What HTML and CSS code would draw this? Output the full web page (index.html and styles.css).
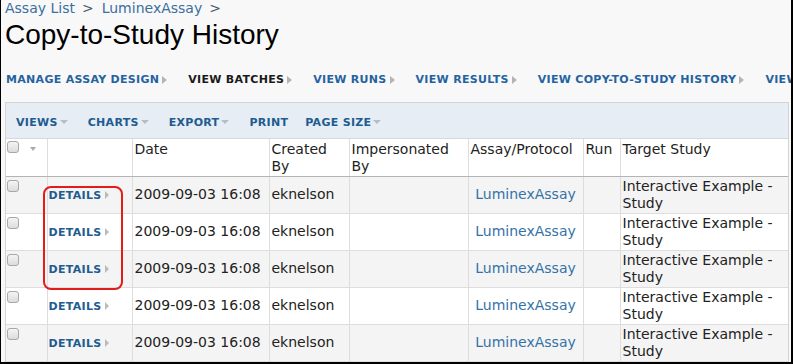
FILE: index.html
```html
<!DOCTYPE html>
<html lang="en">
<head>
    <meta charset="UTF-8">
    <meta name="viewport" content="width=device-width, initial-scale=1.0">
    <title>Copy-to-Study History</title>
    <link rel="stylesheet" href="styles.css">
</head>
<body>
    <div class="frame">
        <div class="crumbs"><a href="#">Assay List</a><span class="sep">&gt;</span><a href="#">LuminexAssay</a><span class="sep">&gt;</span></div>
        <h1 class="title">Copy-to-Study History</h1>
        <div class="assay-nav">
            <a class="nav-link" href="#">Manage Assay Design<span class="arrow"></span></a>
            <a class="nav-link current" href="#">View Batches<span class="arrow"></span></a>
            <a class="nav-link" href="#">View Runs<span class="arrow"></span></a>
            <a class="nav-link" href="#">View Results<span class="arrow"></span></a>
            <a class="nav-link" href="#">View Copy-to-Study History<span class="arrow"></span></a>
            <a class="nav-link" href="#">View<span class="arrow"></span></a>
        </div>
        <div class="grid">
            <div class="toolbar">
                <a class="tool" href="#">Views<span class="drop"></span></a>
                <a class="tool" href="#">Charts<span class="drop"></span></a>
                <a class="tool" href="#">Export<span class="drop"></span></a>
                <a class="tool" href="#">Print</a>
                <a class="tool" href="#">Page Size<span class="drop"></span></a>
            </div>
            <table>
                <colgroup>
                    <col style="width: 41px">
                    <col style="width: 85px">
                    <col style="width: 137px">
                    <col style="width: 80px">
                    <col style="width: 119px">
                    <col style="width: 115px">
                    <col style="width: 37px">
                    <col>
                </colgroup>
                <thead>
                    <tr>
                        <th><input type="checkbox" class="check"><span class="drop head-drop"></span></th>
                        <th></th>
                        <th>Date</th>
                        <th>Created By</th>
                        <th>Impersonated By</th>
                        <th>Assay/Protocol</th>
                        <th>Run</th>
                        <th>Target Study</th>
                    </tr>
                </thead>
                <tbody>
                    <tr class="odd">
                        <td class="sel"><input type="checkbox" class="check"></td>
                        <td><a class="details" href="#">Details<span class="arrow"></span></a></td>
                        <td>2009-09-03 16:08</td>
                        <td>eknelson</td>
                        <td></td>
                        <td class="lookup"><a href="#">LuminexAssay</a></td>
                        <td></td>
                        <td>Interactive Example - Study</td>
                    </tr>
                    <tr>
                        <td class="sel"><input type="checkbox" class="check"></td>
                        <td><a class="details" href="#">Details<span class="arrow"></span></a></td>
                        <td>2009-09-03 16:08</td>
                        <td>eknelson</td>
                        <td></td>
                        <td class="lookup"><a href="#">LuminexAssay</a></td>
                        <td></td>
                        <td>Interactive Example - Study</td>
                    </tr>
                    <tr class="odd">
                        <td class="sel"><input type="checkbox" class="check"></td>
                        <td><a class="details" href="#">Details<span class="arrow"></span></a></td>
                        <td>2009-09-03 16:08</td>
                        <td>eknelson</td>
                        <td></td>
                        <td class="lookup"><a href="#">LuminexAssay</a></td>
                        <td></td>
                        <td>Interactive Example - Study</td>
                    </tr>
                    <tr>
                        <td class="sel"><input type="checkbox" class="check"></td>
                        <td><a class="details" href="#">Details<span class="arrow"></span></a></td>
                        <td>2009-09-03 16:08</td>
                        <td>eknelson</td>
                        <td></td>
                        <td class="lookup"><a href="#">LuminexAssay</a></td>
                        <td></td>
                        <td>Interactive Example - Study</td>
                    </tr>
                    <tr class="odd">
                        <td class="sel"><input type="checkbox" class="check"></td>
                        <td><a class="details" href="#">Details<span class="arrow"></span></a></td>
                        <td>2009-09-03 16:08</td>
                        <td>eknelson</td>
                        <td></td>
                        <td class="lookup"><a href="#">LuminexAssay</a></td>
                        <td></td>
                        <td>Interactive Example - Study</td>
                    </tr>
                </tbody>
            </table>
        </div>
        <div class="callout"></div>
    </div>
</body>
</html>
```

FILE: styles.css
```css
* {
    box-sizing: border-box;
}
html, body {
    margin: 0;
    padding: 0;
}
body {
    font-family: "DejaVu Sans", Verdana, sans-serif;
    color: #222;
}
a {
    text-decoration: none;
}
.frame {
    position: relative;
    width: 793px;
    height: 364px;
    overflow: hidden;
    background-color: #f8f8f8;
    border-left: 1px solid #000;
    border-right: 2px solid #000;
    border-bottom: 2px solid #000;
    padding-left: 4px;
}
.crumbs {
    font-size: 14px;
    line-height: 16px;
    white-space: nowrap;
}
.crumbs a {
    color: #3a6f9f;
}
.crumbs .sep {
    color: #4a5a6a;
    margin: 0 8px 0 7px;
}
.title {
    font-family: "Liberation Sans", Arial, sans-serif;
    font-weight: normal;
    font-size: 28px;
    line-height: 32px;
    margin: 3px 0 0 0;
    color: #000;
}
.assay-nav {
    display: flex;
    white-space: nowrap;
    margin-top: 22px;
    height: 14px;
    align-items: center;
    padding-left: 1px;
}
.nav-link {
    display: flex;
    align-items: center;
    font-size: 11px;
    font-weight: bold;
    letter-spacing: 0.3px;
    text-transform: uppercase;
    color: #2563a0;
    margin-right: 21px;
    line-height: 14px;
}
.nav-link.current {
    color: #1a1a1a;
}
.arrow {
    display: inline-block;
    width: 0;
    height: 0;
    border-left: 5px solid #b4b4b4;
    border-top: 4px solid transparent;
    border-bottom: 4px solid transparent;
    margin-left: 3px;
}
.grid {
    margin-top: 15px;
    width: 784px;
    border: 1px solid #d4d4d4;
    border-bottom: none;
    background-color: #fff;
}
.toolbar {
    display: flex;
    align-items: center;
    height: 36px;
    padding: 3px 0 0 10px;
    background-color: #e6edf4;
    border-bottom: 1px solid #d4d9de;
}
.tool {
    display: flex;
    align-items: center;
    font-size: 11px;
    font-weight: bold;
    letter-spacing: 0.3px;
    text-transform: uppercase;
    color: #215b8f;
    margin-right: 20px;
}
.tool:nth-child(4) {
    margin-right: 17px;
}
.drop {
    display: inline-block;
    width: 0;
    height: 0;
    border-top: 4px solid #b7bec6;
    border-left: 4px solid transparent;
    border-right: 4px solid transparent;
    margin-left: 2px;
}
table {
    table-layout: fixed;
    width: 100%;
    border-collapse: collapse;
    font-size: 14px;
    line-height: 17px;
}
th, td {
    padding: 1px 2px;
    border-right: 1px solid #ddd;
    border-bottom: 1px solid #ddd;
    text-align: left;
    vertical-align: middle;
    overflow: hidden;
}
th:last-child, td:last-child {
    border-right: none;
}
th {
    font-weight: normal;
    vertical-align: top;
    padding: 2px 2px 0 2px;
    border-bottom: 1px solid #b4b4b4;
    height: 37px;
}
tbody tr {
    height: 37px;
    background-color: #fff;
}
tbody tr.odd {
    background-color: #f4f4f4;
}
td.sel {
    vertical-align: top;
    padding: 3px 1px 1px 1px;
}
th:first-child {
    padding-left: 1px;
}
.check {
    appearance: none;
    -webkit-appearance: none;
    display: inline-block;
    width: 12px;
    height: 12px;
    margin: 0;
    border: 1px solid #a8a8a8;
    border-radius: 3px;
    background: linear-gradient(#f4f4f4, #dcdcdc);
    vertical-align: top;
}
.head-drop {
    vertical-align: top;
    margin: 6px 0 0 11px;
    border-top-color: #aaa;
    border-left-width: 3px;
    border-right-width: 3px;
}
td:nth-child(2) {
    padding-left: 1px;
}
.details {
    display: inline-flex;
    align-items: center;
    font-size: 11px;
    font-weight: bold;
    letter-spacing: 0.3px;
    text-transform: uppercase;
    color: #215b8f;
}
.details .arrow {
    border-left-width: 4px;
    border-top-width: 4px;
    border-bottom-width: 4px;
    margin-left: 4px;
    border-left-color: #bbb;
}
.lookup {
    text-align: center;
}
.lookup a {
    color: #3572a8;
}
.callout {
    position: absolute;
    left: 42px;
    top: 186px;
    width: 80px;
    height: 104px;
    border: 2px solid #e41b1b;
    border-radius: 8px;
}
```
